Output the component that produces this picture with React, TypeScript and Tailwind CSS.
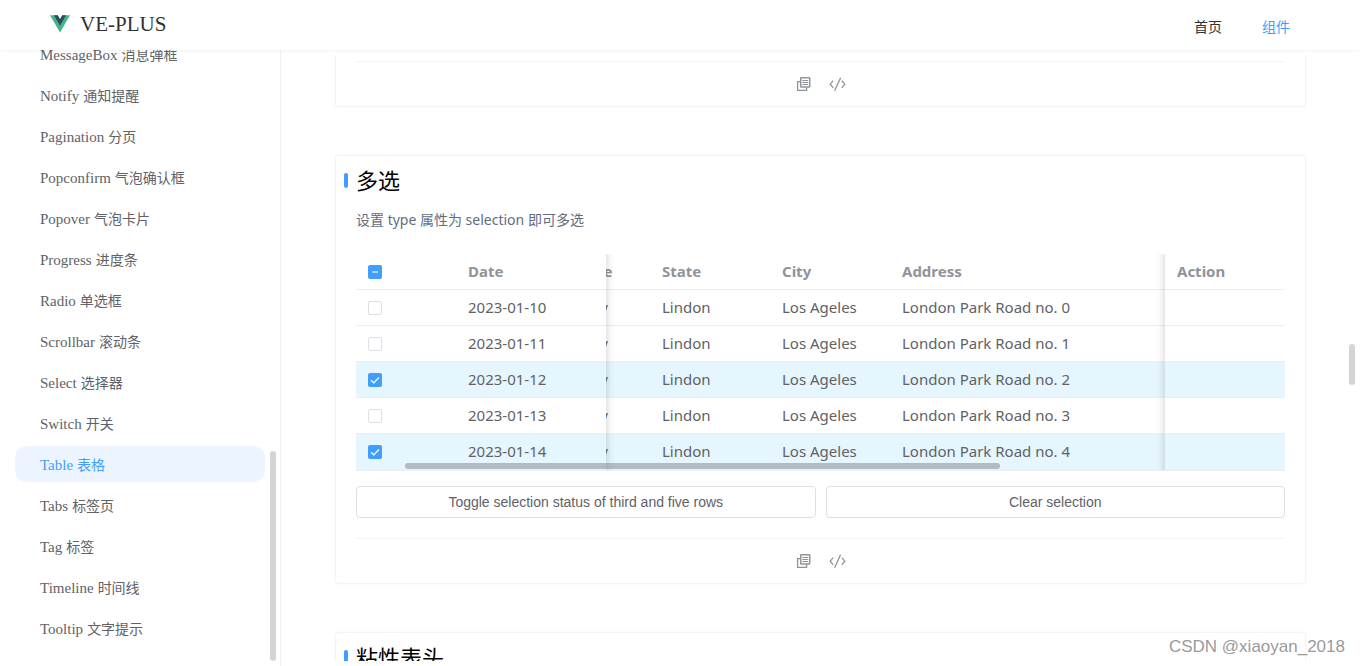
import React, { useLayoutEffect, useRef, useState } from "react";

type MenuItem = { name: string; label: string };

const menu: MenuItem[] = [
  { name: "MessageBox", label: "消息弹框" },
  { name: "Notify", label: "通知提醒" },
  { name: "Pagination", label: "分页" },
  { name: "Popconfirm", label: "气泡确认框" },
  { name: "Popover", label: "气泡卡片" },
  { name: "Progress", label: "进度条" },
  { name: "Radio", label: "单选框" },
  { name: "Scrollbar", label: "滚动条" },
  { name: "Select", label: "选择器" },
  { name: "Switch", label: "开关" },
  { name: "Table", label: "表格" },
  { name: "Tabs", label: "标签页" },
  { name: "Tag", label: "标签" },
  { name: "Timeline", label: "时间线" },
  { name: "Tooltip", label: "文字提示" },
];

const rows = [0, 1, 2, 3, 4].map((i) => ({
  date: `2023-01-1${i}`,
  name: "Andy",
  state: "Lindon",
  city: "Los Ageles",
  address: `London Park Road no. ${i}`,
}));

function Logo() {
  return (
    <svg viewBox="0 0 256 221" className="h-[18px] w-5" aria-hidden="true">
      <path fill="#41b883" d="M204.8 0H256L128 220.8 0 0h97.92L128 51.2 157.44 0z" />
      <path fill="#35495e" d="M50.56 0 128 133.12 204.8 0h-47.36L128 51.2 97.92 0z" />
    </svg>
  );
}

function CopyIcon() {
  return (
    <svg viewBox="0 0 16 16" className="size-4" fill="none" stroke="#909399" aria-hidden="true">
      <path d="M4.2 5.6H1.6v8.8h9V11.6" strokeWidth="1.3" />
      <rect x="4.7" y="1.7" width="9" height="9.4" rx="0.6" strokeWidth="1.5" />
      <path d="M6.3 4.5h5.8M6.3 6.5h5.8M6.3 8.5h5.8" strokeWidth="1" />
    </svg>
  );
}

function CodeIcon() {
  return (
    <svg viewBox="0 0 18 16" className="h-4 w-[18px]" fill="none" stroke="#909399" strokeWidth="1.3" aria-hidden="true">
      <path d="M5.2 4.6 2.2 8.2l3 3.6M13.8 4.6l3 3.6-3 3.6M12.6 1.8 6.6 14.8" />
    </svg>
  );
}

function CardFooter() {
  return (
    <div className="mx-5 flex h-[45px] items-center justify-center gap-4 border-t border-[#f4f4f5]">
      <button type="button" aria-label="Copy code">
        <CopyIcon />
      </button>
      <button type="button" aria-label="View source">
        <CodeIcon />
      </button>
    </div>
  );
}

function CardTitle({ children }: { children: React.ReactNode }) {
  return (
    <h2 className="flex h-[33px] items-center gap-2 pl-2 text-[22px] text-black">
      <span className="h-[15px] w-1 rounded-xs bg-[#409eff]" />
      {children}
    </h2>
  );
}

type CheckProps = { label: string; checked: boolean; partial?: boolean; onChange: () => void };

function Check({ label, checked, partial = false, onChange }: CheckProps) {
  return (
    <label className="grid size-3.5">
      <input
        type="checkbox"
        aria-label={label}
        checked={checked}
        onChange={onChange}
        className={
          checked || partial
            ? "col-start-1 row-start-1 size-3.5 appearance-none rounded-xs bg-[#409eff]"
            : "col-start-1 row-start-1 size-3.5 appearance-none rounded-xs border border-[#dcdfe6] bg-white"
        }
      />
      {(checked || partial) && (
        <svg viewBox="0 0 14 14" fill="none" stroke="#fff" className="pointer-events-none col-start-1 row-start-1 size-3.5" aria-hidden="true">
          {partial ? <path d="M4 7h6" strokeWidth="1.6" opacity="0.65" /> : <path d="m3 7.2 2.8 2.6 5.2-5.3" strokeWidth="1.2" />}
        </svg>
      )}
    </label>
  );
}

const leftShadow =
  "after:pointer-events-none after:absolute after:top-0 after:-bottom-px after:-right-2.5 after:w-2.5 after:shadow-[inset_10px_0_10px_-10px_rgba(0,0,0,0.2)] after:content-['']";
const rightShadow =
  "before:pointer-events-none before:absolute before:top-0 before:-bottom-px before:-left-2.5 before:w-2.5 before:shadow-[inset_-10px_0_10px_-10px_rgba(0,0,0,0.2)] before:content-['']";

function DataTable({ selected, setSelected }: { selected: number[]; setSelected: (v: number[]) => void }) {
  const scroller = useRef<HTMLDivElement>(null);
  const [thumb, setThumb] = useState({ left: 0, width: 0 });

  const sync = () => {
    const el = scroller.current;
    if (el) {
      const ratio = el.clientWidth / el.scrollWidth;
      setThumb({ left: el.scrollLeft * ratio, width: el.clientWidth * ratio });
    }
  };

  useLayoutEffect(() => {
    if (scroller.current) scroller.current.scrollLeft = 76;
    sync();
  }, []);

  const all = selected.length === rows.length;
  const toggle = (i: number) =>
    setSelected(selected.includes(i) ? selected.filter((s) => s !== i) : [...selected, i]);

  return (
    <div className="relative border-b border-[#ebeef5]">
      <div ref={scroller} onScroll={sync} className="overflow-x-auto overflow-y-hidden [scrollbar-width:none]">
        <table className="w-[1450px] table-fixed border-separate border-spacing-0 text-left text-[15px] text-[#606266] [&_td]:h-9 [&_td]:border-b [&_td]:border-[#ebeef5] [&_td]:px-3 [&_th]:h-9 [&_th]:border-b [&_th]:border-[#ebeef5] [&_th]:px-3 [&_tr:last-child>td]:border-b-0 [&_tr:last-child>td]:pb-px">
          <colgroup>
            <col className="w-[100px]" />
            <col className="w-[150px]" />
            <col className="w-[120px]" />
            <col className="w-[120px]" />
            <col className="w-[120px]" />
            <col className="w-[720px]" />
            <col className="w-[120px]" />
          </colgroup>
          <thead className="text-[#909399]">
            <tr>
              <th className="sticky left-0 z-10 bg-white">
                <Check
                  label="Select all"
                  checked={all}
                  partial={selected.length > 0 && !all}
                  onChange={() => setSelected(all ? [] : rows.map((_, i) => i))}
                />
              </th>
              <th className={`sticky left-[100px] z-10 bg-white ${leftShadow}`}>Date</th>
              <th className="text-center">Name</th>
              <th>State</th>
              <th>City</th>
              <th>Address</th>
              <th className={`sticky right-0 z-10 bg-white ${rightShadow}`}>Action</th>
            </tr>
          </thead>
          <tbody>
            {rows.map((r, i) => (
              <tr key={r.date} className={selected.includes(i) ? "bg-[#e5f6ff]" : "bg-white"}>
                <td className="sticky left-0 z-10 bg-inherit">
                  <Check label={`Select ${r.date}`} checked={selected.includes(i)} onChange={() => toggle(i)} />
                </td>
                <td className={`sticky left-[100px] z-10 bg-inherit ${leftShadow}`}>{r.date}</td>
                <td className="text-center">{r.name}</td>
                <td>{r.state}</td>
                <td>{r.city}</td>
                <td>{r.address}</td>
                <td className={`sticky right-0 z-10 bg-inherit ${rightShadow}`} />
              </tr>
            ))}
          </tbody>
        </table>
      </div>
      <div
        className="absolute bottom-px z-20 h-1.5 rounded-full bg-[#909399]/60"
        style={{ left: thumb.left, width: thumb.width }}
      />
    </div>
  );
}

const card = "border border-[#f4f4f5] bg-white shadow-[0_0_2px_rgba(0,0,0,0.05)]";

export default function App() {
  const [selected, setSelected] = useState<number[]>([2, 4]);

  return (
    <div className="relative flex h-screen flex-col overflow-hidden bg-white font-['Noto_Sans','Noto_Sans_CJK_SC',sans-serif]">
      <header className="z-30 flex h-[50px] shrink-0 items-center justify-between bg-white pr-[70px] pl-[50px] shadow-[0_1px_3px_rgba(0,0,0,0.06)]">
        <a href="#home" className="flex items-center gap-2.5 pb-0.5 font-['Liberation_Serif',serif] text-[21px] leading-none text-[#303133]">
          <Logo />
          VE-PLUS
        </a>
        <nav className="flex gap-10 pt-0.5 font-['Noto_Sans_CJK_SC',sans-serif] text-sm">
          <a href="#home" className="text-[#303133]">首页</a>
          <a href="#components" className="text-[#409eff]">组件</a>
        </nav>
      </header>

      <div className="flex min-h-0 flex-1">
        <aside className="relative flex w-[281px] shrink-0 flex-col justify-end overflow-hidden border-r border-[#f0f0f2] pb-5">
          <nav className="flex flex-col gap-[5px] px-[15px] font-['Liberation_Serif','Noto_Sans_CJK_SC',serif]">
            {menu.map((m) => (
              <a
                key={m.name}
                href={`#${m.name}`}
                className={
                  m.name === "Table"
                    ? "flex h-9 w-[250px] items-baseline gap-1 rounded-xl bg-[#ecf5ff] px-[25px] pt-2 text-[#409eff]"
                    : "flex h-9 w-[250px] items-baseline gap-1 rounded-xl px-[25px] pt-2 text-[#606266]"
                }
              >
                <span className="text-[15px] leading-5">{m.name}</span>
                <span className="font-['Noto_Sans_CJK_SC',sans-serif] text-sm">{m.label}</span>
              </a>
            ))}
          </nav>
          <div className="absolute right-1 bottom-[5px] h-[210px] w-1.5 rounded-full bg-[#909399]/40" />
        </aside>

        <main className="relative my-[5px] min-w-0 flex-1 overflow-hidden px-[54px]">
          <div className="flex flex-col gap-12">
            <section className={`rounded-b border-t-0 pt-1.5 ${card}`}>
              <CardFooter />
            </section>

            <section className={`rounded ${card}`}>
              <div className="pt-2">
                <CardTitle>多选</CardTitle>
              </div>
              <div className="px-5 pb-5">
                <p className="pt-[13px] pb-6 text-sm leading-5 text-[#5e6d82]">设置 type 属性为 selection 即可多选</p>
                <DataTable selected={selected} setSelected={setSelected} />
                <div className="mt-[15px] grid grid-cols-2 gap-2.5 font-['Liberation_Sans',sans-serif] text-sm text-[#606266]">
                  <button
                    type="button"
                    className="h-8 rounded border border-[#dcdfe6] bg-white"
                    onClick={() => setSelected([2, 4].filter((i) => !selected.includes(i)).concat(selected.filter((i) => i !== 2 && i !== 4)))}
                  >
                    Toggle selection status of third and five rows
                  </button>
                  <button type="button" className="h-8 rounded border border-[#dcdfe6] bg-white" onClick={() => setSelected([])}>
                    Clear selection
                  </button>
                </div>
              </div>
              <CardFooter />
            </section>

            <section className={`h-40 shrink-0 rounded pt-2 ${card}`}>
              <CardTitle>粘性表头</CardTitle>
            </section>
          </div>
        </main>
        <div className="absolute top-[344px] right-[5px] h-[41px] w-1.5 rounded-full bg-[#909399]/40" />
      </div>

      <div className="pointer-events-none absolute right-[15px] bottom-1.5 z-40 font-['Liberation_Sans',sans-serif] text-[17px] leading-[26px] text-[#9a9a9a] [text-shadow:1px_1px_1px_#fff]">
        CSDN @xiaoyan_2018
      </div>
    </div>
  );
}
